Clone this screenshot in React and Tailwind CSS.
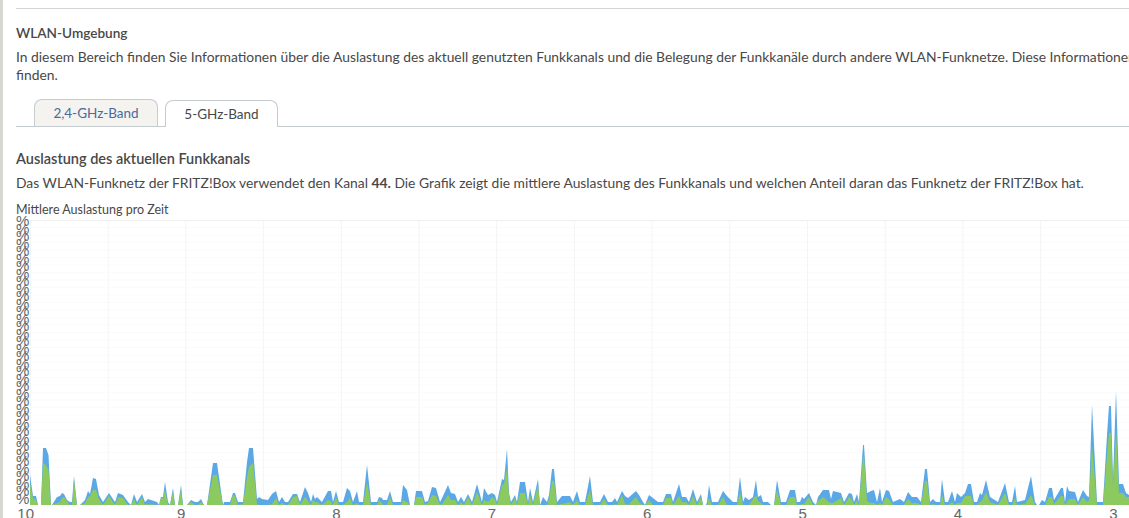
// x (page px), blue height, green height
const USAGE = [
  [30,30,22],[33,9,7],[36,9,5],[38,0,0],[41,0,0],[43,57,42],[46,57,40],[48.5,50,35],[51,0,0],[52,0,0],[57,8,2],[60,9,3],[62,12,7],[64,11,8],[67,5,4],[70,2,0],[72,1,0],[74,29,25],[77,0,0],[80,0,0],[85,5,2],[88,14,8],[90,11,9],[93,27,15],[96,26,15],[99,10,6],[103,2,0],
  [109,12,9],[115,2,0],[118,12,8],[123,10,7],[128,2,0],[131,0,0],[134,11,6],[137,2,0],[142,11,8],[145,2,0],[148,6,1],[157,2,0],[159,0,0],[161,8,7],[163,8,7],[165,23,15],[168,3,0],[170,0,0],[173,17,13],[175,0,0],[178,0,0],[181,20,15],[183,0,0],[187,0,0],[191,5,3],[195,2,0],[198,2,0],[201,6,3],[204,0,0],[207,0,0],[213,42,30],[217,42,30],[223,0,0],[224,2,0],[230,2,0],[233,12,10],[235,12,9],[238,2,0],[243,3,1],[247,43,28],[249,57,38],[253,57,42],[257,6,1],[259,8,0],[262,6,0],[268,5,0],[272,11,1],[276,14,7],[279,3,0],[282,8,2],[285,2,0],[288,2,0],[293,11,8],[297,11,9],[300,2,0],[305,18,8],[308,12,4],[311,3,0],[313,11,5],[315,6,3],[317,8,3],[322,2,0],[328,14,5],[331,14,4],[333,2,0],[336,14,8],[339,2,0],[343,2,0],[347,17,3],[350,14,7],[353,3,0],[357,14,2],[359,2,0],[363,2,0],[367,40,23],[371,2,0],[377,2,0],[379,8,5],
  [382,7,2],[383,5,0],[387,5,0],[390,14,8],[393,2,0],[401,2,0],[403,20,5],[407,15,3],[410,0,0],[414,0,0],[416,14,8],[422,14,8],[425,2,0],[428,4,2],[432,18,10],[436,17,9],[440,2,0],[443,9,2],[448,20,10],[451,12,5],[455,11,5],[458,2,0],[461,8,3],[464,2,0],[468,11,8],[472,2,0],[477,21,13],[479,14,8],[482,2,0],[484,17,5],[488,10,3],[492,12,8],[495,10,6],[497,2,0],[502,26,20],[504,25,21],[507,56,37],[509,12,10],[511,2,0],[515,10,7],[517,2,0],[520,23,12],[525,23,12],[528,2,0],[530,17,10],[533,2,0],[538,26,20],[540,0,0],[543,8,0],[547,2,0],[549,10,6],[552,36,24],[554,36,24],[557,2,0],[562,9,1],[570,9,3],[573,2,0],[577,14,5],[580,2,0],[585,2,0],[590,29,15],[593,2,0],[600,2,0],[604,11,6],[608,3,0],[612,2,0],[615,7,1],[617,2,0],[622,14,10],[625,9,1],[628,7,0],[636,14,8],[639,10,3],[643,2,0],[645,0,0],[649,10,5],[653,7,0],[658,2,0],[663,2,0],[666,11,7],[671,11,7],[673,2,0],[679,21,9],[682,8,3],[686,8,3],[689,2,0],[693,16,9],[697,2,0],[701,11,8],[703,0,0],[706,0,0],[707,2,0],[709,20,7],[712,2,0],[718,2,0],[723,14,8],[727,9,0],[733,2,0],[737,2,0],[740,28,13],[743,2,0],[745,8,0],[749,5,0],[753,8,6],
  [756,25,10],[758,8,4],[761,10,2],[763,2,0],[768,2,0],[771,0,0],[774,0,0],[777,25,15],[781,2,0],[786,2,0],[790,15,8],[795,15,8],[797,2,0],[800,2,0],[802,8,1],[804,6,1],[809,12,8],[813,2,0],[816,0,0],[818,8,4],[823,15,8],[829,15,3],[831,6,2],[833,14,2],[841,12,7],[844,2,0],[849,12,8],[852,11,5],[854,2,0],[857,11,5],[859,3,0],[863,60,48],[864,60,48],[867,12,4],[871,14,2],[874,15,2],[877,2,0],[880,17,2],[882,2,0],[886,15,8],[889,14,6],[893,2,0],[900,6,0],[904,2,0],[908,13,6],[912,8,2],[917,8,2],[921,2,0],[925,36,24],[927,36,24],[930,2,0],[933,6,1],[936,2,0],[940,2,0],[942,26,10],[945,2,0],[948,2,0],[952,14,3],[955,2,0],[957,12,2],[961,8,2],[965,12,9],[968,21,9],[971,21,9],[974,2,0],[977,2,0],[980,12,3],[982,10,4],[986,25,13],[990,8,3],[998,2,0],[1005,22,12],[1009,2,0],[1012,2,0],[1015,19,7],[1017,2,0],[1025,5,1],[1031,29,10],[1035,2,0],[1037,0,0],[1039,0,0],[1042,5,0],[1045,2,0],[1049,17,8],[1052,17,8],[1054,5,1],[1061,17,9],[1063,17,9],[1065,3,0],[1067,19,3],[1069,14,6],[1075,13,6],[1078,3,0],[1083,15,8],[1087,9,3],[1089,8,5],[1092,100,60],[1097,2,0],[1103,2,0],[1107,70,50],[1109,99,72],[1111,99,72],[1113,25,20],[1116,114,75],[1119,21,12],[1123,21,12],[1126,12,8],[1129,10,8],
];

const CHART_H = 285;
const PLOT_LEFT = 30;

function areaPath(index) {
  const pts = USAGE.map((p) => {
    // the blue band never drops under 3px unless the line is really at zero
    const h = index === 1 && p[1] > 0 ? Math.max(p[1], 3) : p[index];
    return `${p[0] - PLOT_LEFT},${CHART_H - h}`;
  });
  const first = USAGE[0][0] - PLOT_LEFT;
  const last = USAGE[USAGE.length - 1][0] - PLOT_LEFT;
  return `M${first},${CHART_H} L${pts.join(" L")} L${last},${CHART_H} Z`;
}

function UsageChart() {
  const rows = Array.from({ length: 38 }, (_, i) => (i + 1) * 7.5);
  const cols = Array.from({ length: 14 }, (_, i) => i * 77.7 + 0.5);
  return (
    <svg width="1099" height={CHART_H} className="block shrink-0">
      {rows.map((y) => (
        <line key={y} x1="0" x2="1099" y1={y} y2={y} stroke="#fbfbfb" />
      ))}
      {cols.map((x) => (
        <line key={x} x1={x} x2={x} y1="0" y2={CHART_H} stroke="#f4f4f4" />
      ))}
      <line x1="0" x2="1099" y1="0.5" y2="0.5" stroke="#f0f0f0" />
      <path d={areaPath(1)} fill="#5aa9e6" />
      <path d={areaPath(2)} fill="#8cc95f" />
    </svg>
  );
}

export default function App() {
  const percents = Array.from({ length: 38 }, (_, i) => i);
  const hours = [10, 9, 8, 7, 6, 5, 4, 3];

  return (
    <div className="h-[518px] w-[1129px] overflow-hidden bg-white border-l-[3px] border-[#d8d8d2] font-['Lato',sans-serif] text-[#484848] text-[13.85px]">
      <div className="pl-[13px] pt-2">
        <div className="border-t border-[#d2d6d6] pt-[14px]">
          <h2 className="text-[13.6px] font-semibold leading-5">WLAN-Umgebung</h2>
          <p className="mt-[5px] leading-[18px] whitespace-nowrap">
            In diesem Bereich finden Sie Informationen über die Auslastung des aktuell genutzten Funkkanals und die Belegung der Funkkanäle durch andere WLAN-Funknetze. Diese Informationen helfen
            <br />
            finden.
          </p>
        </div>

        <div className="mt-4 flex h-[27px] items-end gap-[7px] border-b border-[#c5ccd0] pl-[18px] text-[13.5px]">
          <div className="flex h-[27px] w-[124px] items-center justify-center rounded-t-lg border border-b-0 border-[#c5ccd0] bg-[#f4f3ef] pt-px text-[#4a6aa0]">
            2,4-GHz-Band
          </div>
          <div className="-mb-px flex h-[27px] w-[113px] items-center justify-center rounded-t-lg border border-b-0 border-[#c5ccd0] bg-white pt-px">
            5-GHz-Band
          </div>
        </div>

        <h3 className="mt-[22px] text-[14.5px] font-semibold leading-5">Auslastung des aktuellen Funkkanals</h3>
        <p className="mt-1 leading-5 whitespace-nowrap">
          Das WLAN-Funknetz der FRITZ!Box verwendet den Kanal <b>44.</b> Die Grafik zeigt die mittlere Auslastung des Funkkanals und welchen Anteil daran das Funknetz der FRITZ!Box hat.
        </p>
        <p className="mt-[9px] text-[12.5px] leading-[15px]">Mittlere Auslastung pro Zeit</p>

        <div className="mt-[3px] flex items-start">
          <div className="-mt-[3px] w-[14px] shrink-0 font-['Liberation_Sans',sans-serif] text-[15px] text-[#666666]">
            {percents.map((i) => (
              <div key={i} className="h-[7.5px] leading-[7.5px]">%</div>
            ))}
          </div>
          <UsageChart />
        </div>

        <div className="-ml-[68px] mt-px flex font-['Liberation_Sans',sans-serif] text-[15px] leading-4 text-[#666666]">
          {hours.map((h) => (
            <div key={h} className="w-[155.4px] shrink-0 text-center">{h}</div>
          ))}
        </div>
      </div>
    </div>
  );
}
